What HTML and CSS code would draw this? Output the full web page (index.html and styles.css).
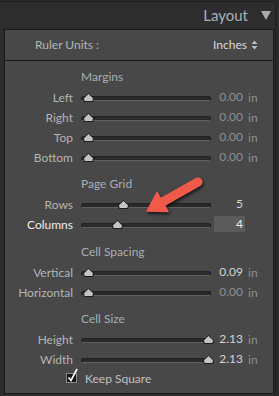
FILE: index.html
```html
<!DOCTYPE html>
<html lang="en">

<head>
    <meta charset="UTF-8">
    <meta name="viewport" content="width=device-width, initial-scale=1.0">
    <title>Layout</title>
    <link rel="stylesheet" href="styles.css">
</head>

<body>
    <div class="frame">
        <div class="module-head">
            <span class="title">Layout</span>
            <svg class="collapse" width="10" height="9" viewBox="0 0 10 9"><path d="M0 0H10L5 9Z" fill="#a7abb0"/></svg>
        </div>

        <div class="panel">
            <div class="ruler">
                <span>Ruler Units :</span>
                <span class="units">Inches
                    <svg width="7" height="10" viewBox="0 0 7 10"><path d="M0.5 4L3.5 0.5L6.5 4Z M0.5 6L3.5 9.5L6.5 6Z" fill="#bdbdbd"/></svg>
                </span>
            </div>

            <div class="section first">
                <div class="heading">Margins</div>
                <div class="row">
                    <span class="label">Left</span>
                    <div class="track"><span class="thumb" style="left: 1px"></span></div>
                    <span class="num">0.00</span><span class="unit">in</span>
                </div>
                <div class="row">
                    <span class="label">Right</span>
                    <div class="track"><span class="thumb" style="left: 1px"></span></div>
                    <span class="num">0.00</span><span class="unit">in</span>
                </div>
                <div class="row">
                    <span class="label">Top</span>
                    <div class="track"><span class="thumb" style="left: 1px"></span></div>
                    <span class="num">0.00</span><span class="unit">in</span>
                </div>
                <div class="row">
                    <span class="label">Bottom</span>
                    <div class="track"><span class="thumb" style="left: 1px"></span></div>
                    <span class="num">0.00</span><span class="unit">in</span>
                </div>
            </div>

            <div class="section">
                <div class="heading">Page Grid</div>
                <div class="row">
                    <span class="label">Rows</span>
                    <div class="track"><span class="thumb" style="left: 36px"></span></div>
                    <span class="num bright">5</span>
                </div>
                <div class="row active">
                    <span class="label">Columns</span>
                    <div class="track"><span class="thumb" style="left: 30px"></span></div>
                    <span class="num bright editing">4</span>
                </div>
            </div>

            <div class="section spacing">
                <div class="heading">Cell Spacing</div>
                <div class="row">
                    <span class="label">Vertical</span>
                    <div class="track"><span class="thumb" style="left: 1px"></span></div>
                    <span class="num bright">0.09</span><span class="unit">in</span>
                </div>
                <div class="row">
                    <span class="label">Horizontal</span>
                    <div class="track"><span class="thumb" style="left: 1px"></span></div>
                    <span class="num">0.00</span><span class="unit">in</span>
                </div>
            </div>

            <div class="section">
                <div class="heading">Cell Size</div>
                <div class="row">
                    <span class="label">Height</span>
                    <div class="track"><span class="thumb" style="left: 121px"></span></div>
                    <span class="num bright">2.13</span><span class="unit">in</span>
                </div>
                <div class="row">
                    <span class="label">Width</span>
                    <div class="track"><span class="thumb" style="left: 121px"></span></div>
                    <span class="num bright">2.13</span><span class="unit">in</span>
                </div>
                <div class="check">
                    <svg width="16" height="16" viewBox="0 0 16 16">
                        <rect x="0.5" y="5.5" width="10" height="9" fill="#151515" stroke="#8a8a8a"/>
                        <path d="M2.5 9.5L5 12.5L11 1" fill="none" stroke="#f2f2f2" stroke-width="1.8"/>
                    </svg>
                    <span>Keep Square</span>
                </div>
            </div>
        </div>

        <!-- annotation arrow -->
        <svg class="arrow" width="279" height="396" viewBox="0 0 279 396">
            <line x1="198" y1="182" x2="160" y2="203.5" stroke="#f05a4a" stroke-width="9" stroke-linecap="round"/>
            <path d="M147 211L157 192.5L168 211.5Z" fill="#f05a4a" stroke="#f05a4a" stroke-width="1.5" stroke-linejoin="round"/>
        </svg>
    </div>
</body>

</html>
```

FILE: styles.css
```css
* {
    box-sizing: border-box;
    margin: 0;
    padding: 0;
}

body {
    width: 279px;
    height: 396px;
    overflow: hidden;
    background-color: #2a2a2a;
    font-family: Lato, "Liberation Sans", sans-serif;
    font-size: 12px;
    color: #b4b4b4;
}

.frame {
    position: relative;
    width: 276px;
    height: 395px;
    margin-top: 1px;
    border-top: 1px solid #1d1d1d;
    border-right: 1px solid #1d1d1d;
    background-color: #2d2d2d;
}

.module-head {
    display: flex;
    justify-content: flex-end;
    align-items: center;
    height: 27px;
    padding-right: 4px;
    padding-bottom: 2px;
}

.title {
    font-size: 15px;
    color: #a9afb6;
    margin-right: 13px;
}

.collapse {
    margin-top: 1px;
}

.panel {
    width: 270px;
    margin-left: 4px;
    height: 365px;
    background-color: #484848;
    border: 1px solid #1b1b1b;
}

.ruler {
    display: flex;
    justify-content: space-between;
    align-items: center;
    height: 31px;
    padding: 0 15px 1px 30px;
    border-bottom: 1px solid #1b1b1b;
}

.units {
    display: flex;
    align-items: center;
    gap: 4px;
    color: #d8d8d8;
}

.section {
    margin-top: 6px;
}

.section.first {
    margin-top: 5px;
}

.section.spacing {
    margin-top: 7px;
}

.heading {
    height: 21px;
    line-height: 21px;
    padding-left: 76px;
    color: #a6adb5;
}

/* label | slider | value | unit */
.row {
    display: grid;
    grid-template-columns: 76px 130px 34px auto;
    align-items: center;
    height: 20px;
}

.label {
    text-align: right;
    padding-right: 8px;
    white-space: nowrap;
}

.row.active .label {
    color: #ececec;
}

.track {
    position: relative;
    height: 5px;
    margin-top: 3px;
    border-radius: 3px;
    background-color: #2a2a2a;
    border: 1px solid #222;
    border-bottom-color: #606060;
}

.thumb {
    position: absolute;
    bottom: -2px;
    width: 11px;
    height: 9px;
    background-color: #1e1e1e;
    clip-path: polygon(50% 0, 100% 62%, 92% 100%, 8% 100%, 0 62%);
}

.thumb::after {
    content: "";
    position: absolute;
    left: 1px;
    top: 1px;
    width: 9px;
    height: 7px;
    background-color: #c4c4c4;
    clip-path: polygon(50% 0, 100% 62%, 92% 100%, 8% 100%, 0 62%);
}

.num {
    margin-left: 3px;
    text-align: right;
    padding-right: 2px;
    color: #8f8f8f;
    line-height: 16px;
}

.num.bright {
    color: #d4d4d4;
}

.num.editing {
    background-color: #5b5b5b;
    color: #ececec;
}

.unit {
    margin-left: 3px;
    color: #8f8f8f;
}

.check {
    display: flex;
    align-items: center;
    height: 17px;
    padding-left: 61px;
    margin-top: 1px;
    color: #c0c0c0;
}

.check svg {
    margin-top: -6px;
    margin-right: 3px;
}

.arrow {
    position: absolute;
    top: -2px;
    left: 0;
    pointer-events: none;
    filter: drop-shadow(1px 2px 1.5px rgba(0, 0, 0, 0.7));
}
```
